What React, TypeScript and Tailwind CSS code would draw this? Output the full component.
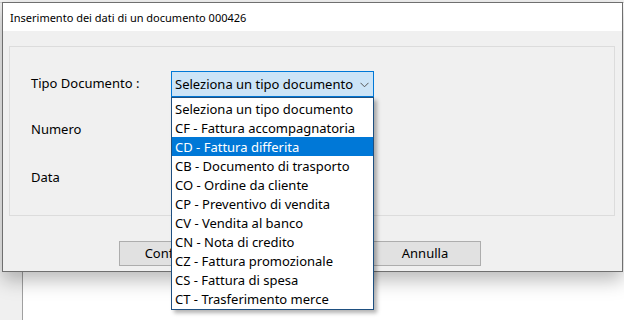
import React from "react";

const items = [
  "Seleziona un tipo documento",
  "CF - Fattura accompagnatoria",
  "CD - Fattura differita",
  "CB - Documento di trasporto",
  "CO - Ordine da cliente",
  "CP - Preventivo di vendita",
  "CV - Vendita al banco",
  "CN - Nota di credito",
  "CZ - Fattura promozionale",
  "CS - Fattura di spesa",
  "CT - Trasferimento merce",
];

export default function App() {
  const font = { fontFamily: '"Noto Sans", "Open Sans", sans-serif' };
  return (
    <div className="relative w-[624px] h-[320px] overflow-hidden bg-white" style={font}>
      {/* background app */}
      <div className="flex h-full">
        <div className="w-[23px] h-full bg-[#f0f0f0] border-r border-[#a0a0a0]" />
        <div className="flex-1 bg-white" />
      </div>
      <div className="absolute left-0 top-0 w-full h-[3px] bg-[#f4f4f4] border-b border-[#d0d0d0]" />

      {/* dialog */}
      <div className="absolute left-[2px] top-[2px] w-[621px] h-[270px] flex flex-col border border-[#6f6f6f] bg-[#f0f0f0] shadow-[0_8px_18px_rgba(0,0,0,0.28)]">
        <div className="h-[28px] bg-white flex items-center pl-[7px] text-[11px] text-black leading-none whitespace-nowrap">
          Inserimento dei dati di un documento 000426
        </div>
        <div className="flex-1 flex flex-col px-[6px] pt-[15px]">
          <div className="h-[170px] border border-[#dcdcdc] mr-[1px] flex flex-col pl-[21px] pt-[24px] text-[13px] text-black">
            <div className="flex items-center h-[26px]">
              <div className="w-[140px] whitespace-nowrap">Tipo Documento :</div>
              <div className="w-[203px] h-[26px] border border-[#0078d7] bg-[#cce4f7] flex items-center pl-[3px] pr-[4px]">
                <span className="flex-1 leading-none whitespace-nowrap">Seleziona un tipo documento</span>
                <svg width="9" height="6" viewBox="0 0 9 6" className="mt-[1px]">
                  <path d="M0.5 0.8 L4.5 4.8 L8.5 0.8" fill="none" stroke="#555" strokeWidth="1" />
                </svg>
              </div>
            </div>
            <div className="flex items-center h-[26px] mt-[20px]">Numero</div>
            <div className="flex items-center h-[26px] mt-[22px]">Data</div>
          </div>
          <div className="flex gap-[138px] pl-[110px] mt-[25px] text-[13px]">
            <div className="w-[112px] h-[25px] bg-[#e1e1e1] border border-[#adadad] flex items-center justify-center">Conferma</div>
            <div className="w-[112px] h-[25px] bg-[#e1e1e1] border border-[#adadad] flex items-center justify-center">Annulla</div>
          </div>
        </div>
      </div>

      {/* dropdown list */}
      <div className="absolute left-[171px] top-[97px] w-[203px] bg-white border border-[#1e4f80] py-[1px] shadow-[3px_3px_4px_rgba(0,0,0,0.3)] text-[13px]">
        {items.map((it, i) => (
          <div
            key={it}
            className={
              "h-[19px] flex items-center pl-[3px] pt-[2px] leading-none whitespace-nowrap " +
              (i === 2 ? "bg-[#0078d7] text-white" : "text-black")
            }
          >
            {it}
          </div>
        ))}
      </div>
    </div>
  );
}
